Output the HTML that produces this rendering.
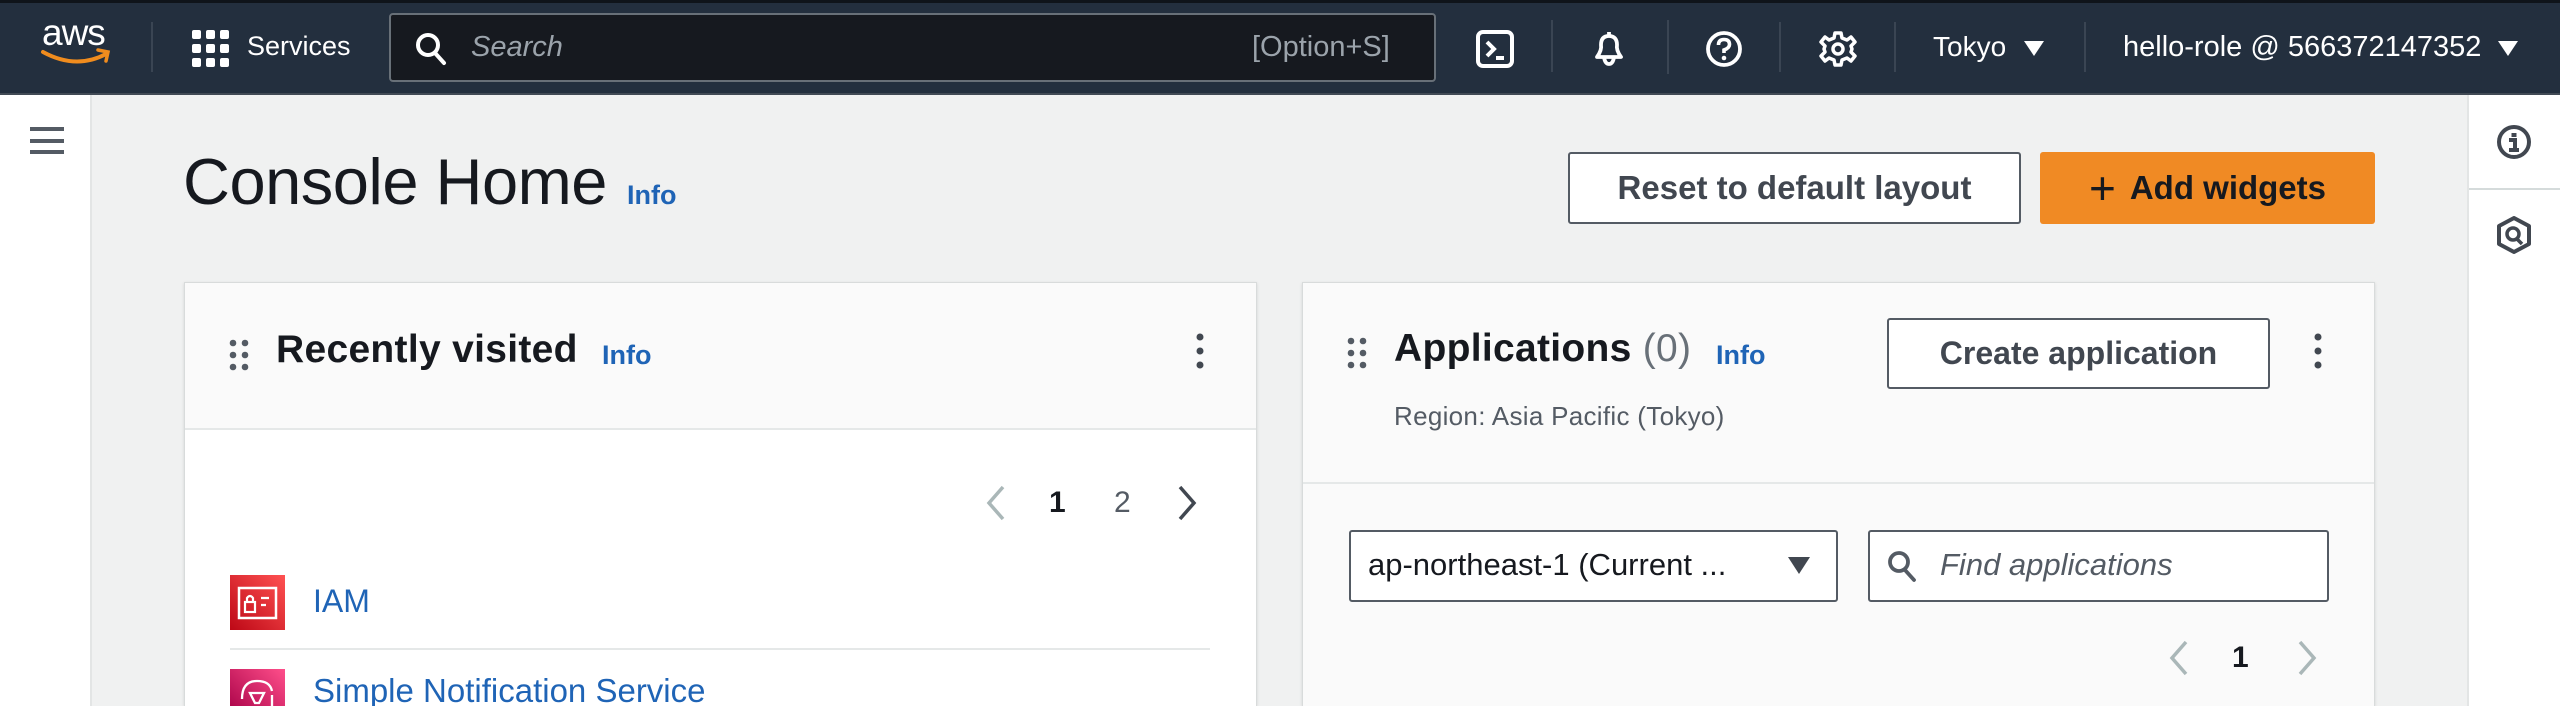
<!DOCTYPE html>
<html><head><meta charset="utf-8">
<style>
*{box-sizing:border-box;margin:0;padding:0}
html,body{width:2560px;height:706px;overflow:hidden}
body{background:#f0f1f1;font-family:"Liberation Sans",sans-serif;position:relative;color:#16191f}
.a{position:absolute}
.top{left:0;top:0;width:2560px;height:95px;background:#232f3e;border-top:3px solid #0f141a;border-bottom:2px solid #414a55}
.wt{color:#fff;font-size:27px;white-space:nowrap}
.div{width:2px;background:#3a4553}
.link{color:#1f64b6;font-weight:bold}
.card{background:#fafafa;border:1px solid #d8dbdb;border-bottom:none;box-shadow:0 1px 3px rgba(0,0,0,.12)}
.btn{border:2px solid #545b64;border-radius:3px;background:#fff;color:#414750;font-weight:bold;font-size:32px;display:flex;align-items:center;justify-content:center;white-space:nowrap}
.dots{width:20px;height:32px}
</style></head><body>
<div class="a top"></div>
<div class="a" style="left:42px;top:12px;color:#fff;font-size:37px;letter-spacing:-1px">aws</div>
<svg class="a" style="left:40px;top:46px" width="74" height="24" viewBox="0 0 74 24"><path d="M3 6 Q36 24 66 8" stroke="#f08c1e" stroke-width="4" fill="none" stroke-linecap="round"/><path d="M58 4 L68 6 L66 15" stroke="#f08c1e" stroke-width="3.5" fill="none" stroke-linecap="round"/></svg>
<div class="a div" style="left:151px;top:22px;height:50px"></div>
<svg class="a" style="left:192px;top:30px" width="38" height="38" viewBox="0 0 38 38" fill="#fff"><rect x="0" y="0" width="9" height="9" rx="2"/><rect x="14" y="0" width="9" height="9" rx="2"/><rect x="28" y="0" width="9" height="9" rx="2"/><rect x="0" y="14" width="9" height="9" rx="2"/><rect x="14" y="14" width="9" height="9" rx="2"/><rect x="28" y="14" width="9" height="9" rx="2"/><rect x="0" y="28" width="9" height="9" rx="2"/><rect x="14" y="28" width="9" height="9" rx="2"/><rect x="28" y="28" width="9" height="9" rx="2"/></svg>
<div class="a wt" style="left:247px;top:31px">Services</div>
<div class="a" style="left:389px;top:13px;width:1047px;height:69px;background:#16191f;border:2px solid #687078;border-radius:4px"></div>
<svg class="a" style="left:414px;top:31px" width="34" height="36" viewBox="0 0 34 36"><circle cx="14" cy="14" r="10" stroke="#fff" stroke-width="4" fill="none"/><path d="M21 22 L30 32" stroke="#fff" stroke-width="4" stroke-linecap="round"/></svg>
<div class="a" style="left:471px;top:31px;color:#9ba3ab;font-size:29px;font-style:italic">Search</div>
<div class="a" style="left:1252px;top:31px;color:#9ba3ab;font-size:29px">[Option+S]</div>
<svg class="a" style="left:1476px;top:30px" width="38" height="38" viewBox="0 0 38 38"><rect x="2" y="2" width="34" height="34" rx="5" stroke="#fff" stroke-width="4" fill="none"/><path d="M11 12 L18 19 L11 26 M20 28 L28 28" stroke="#fff" stroke-width="4" fill="none"/></svg>
<div class="a div" style="left:1551px;top:20px;height:52px"></div>
<svg class="a" style="left:1589px;top:28px" width="40" height="40" viewBox="0 0 40 40"><path d="M20 4 V7 M8 29 Q13 22 12 17 Q12 8 20 8 Q28 8 28 17 Q27 22 32 29 Z M15 29 Q16 36 20 36 Q24 36 25 29" stroke="#fff" stroke-width="3.8" fill="none" stroke-linejoin="round"/></svg>
<div class="a div" style="left:1667px;top:20px;height:54px"></div>
<svg class="a" style="left:1705px;top:30px" width="38" height="38" viewBox="0 0 38 38"><circle cx="19" cy="19" r="16" stroke="#fff" stroke-width="3.8" fill="none"/><path d="M13.5 15 Q13.5 9.5 19 9.5 Q24.5 9.5 24.5 14.5 Q24.5 18 19 20 V23" stroke="#fff" stroke-width="3.6" fill="none"/><circle cx="19" cy="28" r="2.3" fill="#fff"/></svg>
<div class="a div" style="left:1779px;top:22px;height:50px"></div>
<svg class="a" style="left:1819px;top:30px" width="38" height="38" viewBox="0 0 38 38"><path d="M16 3 H22 L23 8 L28 10 L32 7 L36 12 L32 16 L33 19 L32 22 L36 26 L32 31 L28 28 L23 30 L22 35 H16 L15 30 L10 28 L6 31 L2 26 L6 22 L5 19 L6 16 L2 12 L6 7 L10 10 L15 8 Z" stroke="#fff" stroke-width="3.5" fill="none" stroke-linejoin="round"/><circle cx="19" cy="19" r="5" stroke="#fff" stroke-width="3.5" fill="none"/></svg>
<div class="a div" style="left:1894px;top:22px;height:50px"></div>
<div class="a wt" style="left:1933px;top:31px;font-size:28px">Tokyo</div>
<svg class="a" style="left:2024px;top:41px" width="20" height="16"><path d="M0 0 H20 L10 15 Z" fill="#fff"/></svg>
<div class="a div" style="left:2084px;top:22px;height:50px"></div>
<div class="a wt" style="left:2123px;top:31px;font-size:29px">hello-role @ 566372147352</div>
<svg class="a" style="left:2498px;top:41px" width="20" height="16"><path d="M0 0 H20 L10 15 Z" fill="#fff"/></svg>

<div class="a" style="left:0;top:95px;width:92px;height:611px;background:#fff;border-right:2px solid #e3e5e5"></div>
<svg class="a" style="left:30px;top:127px" width="34" height="30"><rect y="0" width="34" height="4" fill="#545b64"/><rect y="12" width="34" height="4" fill="#545b64"/><rect y="23" width="34" height="4" fill="#545b64"/></svg>
<div class="a" style="left:2467px;top:95px;width:93px;height:611px;background:#fff;border-left:2px solid #e3e5e5"></div>
<div class="a" style="left:2469px;top:188px;width:91px;height:2px;background:#d5dbdb"></div>
<svg class="a" style="left:2496px;top:124px" width="36" height="36" viewBox="0 0 36 36"><circle cx="18" cy="18" r="15" stroke="#414750" stroke-width="4" fill="none"/><rect x="15.5" y="9" width="5" height="4" fill="#414750"/><path d="M13 16 H19 V25 M13 26 H23" stroke="#414750" stroke-width="4" fill="none"/></svg>
<svg class="a" style="left:2496px;top:216px" width="36" height="38" viewBox="0 0 36 38"><path d="M18 2 L33 10 V28 L18 36 L3 28 V10 Z" stroke="#414750" stroke-width="4" fill="none" stroke-linejoin="round"/><circle cx="17" cy="18" r="6" stroke="#414750" stroke-width="3.5" fill="none"/><path d="M21 23 L26 28" stroke="#414750" stroke-width="3.5"/></svg>

<div class="a" style="left:183px;top:144px;font-size:65px;color:#16191f;letter-spacing:-0.5px;white-space:nowrap">Console Home</div>
<div class="a link" style="left:627px;top:180px;font-size:27px">Info</div>
<div class="a btn" style="left:1568px;top:152px;width:453px;height:72px;font-size:33px">Reset to default layout</div>
<div class="a" style="left:2040px;top:152px;width:335px;height:72px;background:#f08a24;border-radius:3px;color:#16191f;font-weight:bold;font-size:33px;display:flex;align-items:center;justify-content:center;white-space:nowrap"><span style="font-size:46px;font-weight:normal;margin-right:14px;line-height:1">+</span>Add widgets</div>

<div class="a card" style="left:184px;top:282px;width:1073px;height:424px"></div>
<div class="a" style="left:185px;top:428px;width:1071px;height:278px;background:#fff;border-top:2px solid #e5e8e8"></div>
<svg class="a dots" style="left:229px;top:339px" viewBox="0 0 20 32" fill="#545b64"><circle cx="4" cy="4" r="3.3"/><circle cx="16" cy="4" r="3.3"/><circle cx="4" cy="16" r="3.3"/><circle cx="16" cy="16" r="3.3"/><circle cx="4" cy="28" r="3.3"/><circle cx="16" cy="28" r="3.3"/></svg>
<div class="a" style="left:276px;top:328px;font-size:39px;font-weight:bold;letter-spacing:0.3px;white-space:nowrap">Recently visited</div>
<div class="a link" style="left:602px;top:340px;font-size:27px">Info</div>
<svg class="a" style="left:1194px;top:332px" width="12" height="40" fill="#414750"><circle cx="6" cy="5" r="3.5"/><circle cx="6" cy="19" r="3.5"/><circle cx="6" cy="33" r="3.5"/></svg>
<svg class="a" style="left:983px;top:485px" width="24" height="36"><path d="M20 2 L6 18 L20 34" stroke="#aab7b8" stroke-width="3.5" fill="none"/></svg>
<div class="a" style="left:1049px;top:486px;font-size:30px;font-weight:bold">1</div>
<div class="a" style="left:1114px;top:486px;font-size:30px;color:#545b64">2</div>
<svg class="a" style="left:1176px;top:485px" width="24" height="36"><path d="M4 2 L18 18 L4 34" stroke="#414750" stroke-width="3.5" fill="none"/></svg>
<div class="a" style="left:230px;top:575px;width:55px;height:55px;background:linear-gradient(45deg,#bd0816,#ff5252)"></div>
<svg class="a" style="left:230px;top:575px" width="55" height="55" viewBox="0 0 55 55"><rect x="9" y="13" width="37" height="30" stroke="#fff" stroke-width="2.5" fill="none"/><rect x="15" y="27" width="10" height="10" stroke="#fff" stroke-width="2.2" fill="none"/><path d="M17 27 V23 Q20 19 23 23 V27 M31 23 H39 M31 30 H36" stroke="#fff" stroke-width="2.2" fill="none"/></svg>
<div class="a" style="left:313px;top:583px;font-size:32px;color:#1f64b6">IAM</div>
<div class="a" style="left:230px;top:648px;width:980px;height:2px;background:#e5e8e8"></div>
<div class="a" style="left:230px;top:669px;width:55px;height:37px;background:linear-gradient(45deg,#b0084d,#ff4f8b)"></div>
<svg class="a" style="left:230px;top:669px" width="55" height="37" viewBox="0 0 55 37"><path d="M12 30 Q12 12 27 12 Q40 12 42 22 M20 24 H34 L29 34 H25 Z M42 26 V37" stroke="#fff" stroke-width="2.3" fill="none"/></svg>
<div class="a" style="left:313px;top:675px;font-size:33px;line-height:31px;height:31px;overflow:hidden;color:#1f64b6;white-space:nowrap">Simple Notification Service</div>

<div class="a card" style="left:1302px;top:282px;width:1073px;height:424px"></div>
<div class="a" style="left:1303px;top:482px;width:1071px;height:2px;background:#e5e8e8"></div>
<svg class="a dots" style="left:1347px;top:337px" viewBox="0 0 20 32" fill="#545b64"><circle cx="4" cy="4" r="3.3"/><circle cx="16" cy="4" r="3.3"/><circle cx="4" cy="16" r="3.3"/><circle cx="16" cy="16" r="3.3"/><circle cx="4" cy="28" r="3.3"/><circle cx="16" cy="28" r="3.3"/></svg>
<div class="a" style="left:1394px;top:327px;font-size:39px;font-weight:bold;letter-spacing:0.3px;white-space:nowrap">Applications <span style="font-weight:normal;color:#687078">(0)</span></div>
<div class="a link" style="left:1716px;top:340px;font-size:27px">Info</div>
<div class="a" style="left:1394px;top:401px;font-size:26px;letter-spacing:0.3px;color:#545b64;white-space:nowrap">Region: Asia Pacific (Tokyo)</div>
<div class="a btn" style="left:1887px;top:318px;width:383px;height:71px">Create application</div>
<svg class="a" style="left:2312px;top:332px" width="12" height="40" fill="#414750"><circle cx="6" cy="5" r="3.5"/><circle cx="6" cy="19" r="3.5"/><circle cx="6" cy="33" r="3.5"/></svg>
<div class="a" style="left:1349px;top:530px;width:489px;height:72px;background:#fff;border:2px solid #545b64;border-radius:3px"></div>
<div class="a" style="left:1368px;top:547px;font-size:31px;color:#16191f;white-space:nowrap">ap-northeast-1 (Current ...</div>
<svg class="a" style="left:1788px;top:557px" width="22" height="18"><path d="M0 0 H22 L11 17 Z" fill="#414750"/></svg>
<div class="a" style="left:1868px;top:530px;width:461px;height:72px;background:#fff;border:2px solid #545b64;border-radius:3px"></div>
<svg class="a" style="left:1886px;top:549px" width="32" height="36" viewBox="0 0 32 36"><circle cx="13" cy="13" r="9" stroke="#545b64" stroke-width="3.8" fill="none"/><path d="M19 21 L28 31" stroke="#545b64" stroke-width="3.8" stroke-linecap="round"/></svg>
<div class="a" style="left:1940px;top:547px;font-size:31px;font-style:italic;color:#545b64;white-space:nowrap">Find applications</div>
<svg class="a" style="left:2166px;top:640px" width="24" height="36"><path d="M20 2 L6 18 L20 34" stroke="#aab7b8" stroke-width="3.5" fill="none"/></svg>
<div class="a" style="left:2232px;top:641px;font-size:30px;font-weight:bold">1</div>
<svg class="a" style="left:2296px;top:640px" width="24" height="36"><path d="M4 2 L18 18 L4 34" stroke="#aab7b8" stroke-width="3.5" fill="none"/></svg>
</body></html>
